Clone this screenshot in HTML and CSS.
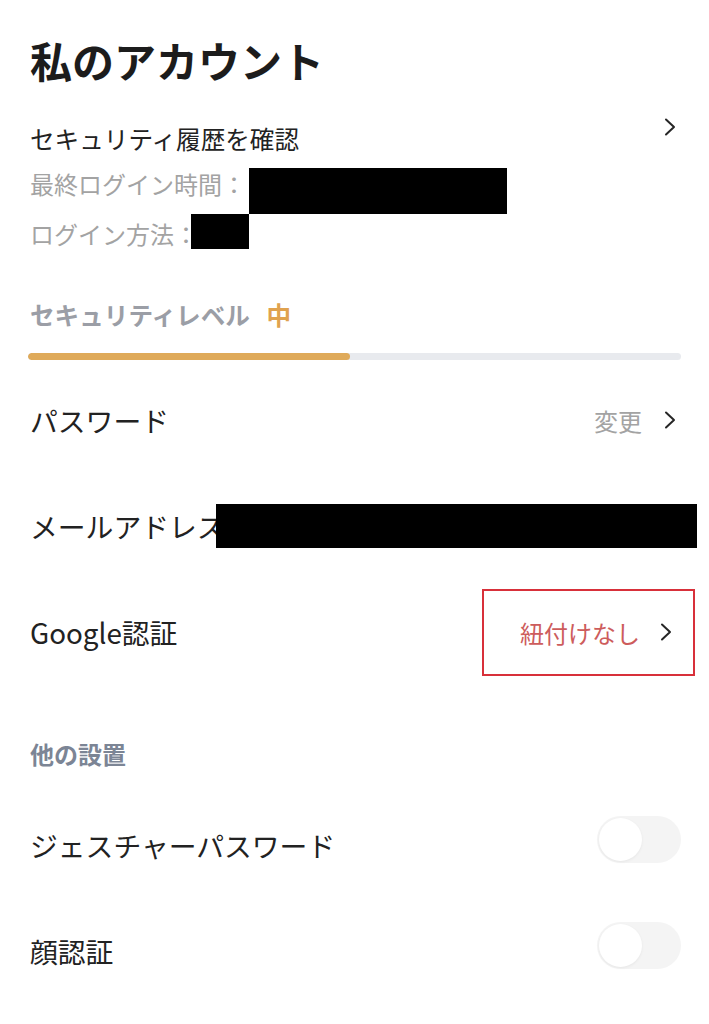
FILE: index.html
```html
<!DOCTYPE html>
<html lang="ja">
	<head>
		<meta charset="UTF-8" />
		<meta name="viewport" content="width=device-width, initial-scale=1.0" />
		<title>私のアカウント</title>
		<link rel="stylesheet" href="styles.css">
	</head>
	<body>
		<div class="page">
			<h1 class="page-title">私のアカウント</h1>

			<div class="history">
				<div class="history-head">
					<span>セキュリティ履歴を確認</span>
					<svg class="chevron" viewBox="0 0 14 20" width="14" height="20"><path d="M3 2.5 L11 10 L3 17.5" /></svg>
				</div>
				<div class="meta-row">
					<span class="meta-text">最終ログイン時間：</span>
					<span class="redact redact-time"></span>
				</div>
				<div class="meta-row meta-row-2">
					<span class="meta-text">ログイン方法：</span>
					<span class="redact redact-method"></span>
				</div>
			</div>

			<div class="level">
				<span class="level-label">セキュリティレベル</span>
				<span class="level-value">中</span>
			</div>
			<div class="level-bar">
				<div class="level-fill"></div>
			</div>

			<div class="row">
				<span class="row-label">パスワード</span>
				<div class="row-action">
					<span class="action-text">変更</span>
					<svg class="chevron" viewBox="0 0 14 20" width="14" height="20"><path d="M3 2.5 L11 10 L3 17.5" /></svg>
				</div>
			</div>

			<div class="row row-email">
				<span class="row-label">メールアドレス</span>
				<span class="redact redact-email"></span>
			</div>

			<div class="row">
				<span class="row-label">Google認証</span>
				<div class="row-action highlight">
					<span class="action-text unlinked">紐付けなし</span>
					<svg class="chevron" viewBox="0 0 14 20" width="14" height="20"><path d="M3 2.5 L11 10 L3 17.5" /></svg>
				</div>
			</div>

			<div class="section-title">他の設置</div>

			<div class="row">
				<span class="row-label">ジェスチャーパスワード</span>
				<div class="toggle"><div class="knob"></div></div>
			</div>

			<div class="row">
				<span class="row-label">顔認証</span>
				<div class="toggle"><div class="knob"></div></div>
			</div>
		</div>
	</body>
</html>
```

FILE: styles.css
```css
* {
	margin: 0;
	padding: 0;
	box-sizing: border-box;
}

body {
	font-family: "Noto Sans CJK JP", "Noto Sans", sans-serif;
	background: white;
	color: #222;
}

.page {
	padding: 0 28px 0 30px;
}

.page-title {
	font-size: 42px;
	font-weight: bold;
	line-height: 60px;
	margin-top: 30px;
	color: #1c1c1c;
}

.chevron {
	fill: none;
	stroke: #262626;
	stroke-width: 2;
	stroke-linecap: round;
	stroke-linejoin: round;
	flex-shrink: 0;
}

/* security history */
.history {
	margin-top: 25px;
}

.history-head {
	display: flex;
	justify-content: space-between;
	align-items: flex-start;
	font-size: 24.6px;
	line-height: 46px;
	padding-right: 4px;
}

.history-head .chevron {
	margin-top: 2px;
}

.meta-row {
	display: flex;
	align-items: flex-start;
	font-size: 24px;
	color: #a3a3a3;
}

.meta-text {
	line-height: 46px;
	white-space: nowrap;
}

.meta-row-2 .meta-text {
	line-height: 40px;
}

.redact {
	display: inline-block;
	background: black;
	flex-shrink: 0;
}

.redact-time {
	width: 258px;
	height: 46px;
	margin-top: 7px;
	margin-left: 3px;
}

.redact-method {
	width: 58px;
	height: 35px;
	margin-left: -7px;
}

.row-email {
	justify-content: flex-start;
}

.redact-email {
	width: 481px;
	height: 44px;
	margin-left: -9px;
	position: relative;
}

/* security level */
.level {
	margin-top: 40px;
	line-height: 40px;
	font-size: 24.6px;
	font-weight: bold;
}

.level-label {
	color: #9b9ea6;
}

.level-value {
	color: #e0a24f;
	margin-left: 11px;
}

.level-bar {
	margin-top: 19px;
	margin-left: -2px;
	height: 7px;
	background: #e8eaee;
	border-radius: 4px;
	overflow: hidden;
}

.level-fill {
	width: 49.3%;
	height: 100%;
	background: #dfaa5a;
	border-radius: 4px;
}

/* rows */
.level-bar + .row {
	margin-top: 7px;
}

.row {
	height: 106px;
	display: flex;
	justify-content: space-between;
	align-items: center;
}

.row-label {
	font-size: 27.8px;
	color: #222;
	white-space: nowrap;
}

.row-action {
	display: flex;
	align-items: center;
	gap: 21px;
	padding-right: 4px;
}

.action-text {
	font-size: 24px;
	color: #a3a3a3;
}

.action-text.unlinked {
	color: #cd5c5c;
}

.highlight {
	border: 2px solid #d8303a;
	height: 87px;
	width: 213px;
	padding: 0 16px 0 36px;
	margin-right: -14px;
	gap: 19px;
}

.section-title {
	margin-top: 49px;
	line-height: 40px;
	font-size: 24px;
	font-weight: bold;
	color: #7c8595;
}

.section-title + .row {
	margin-top: 18px;
}

/* toggle */
.toggle {
	width: 84px;
	height: 47px;
	border-radius: 24px;
	background: #f4f4f4;
	padding: 2px;
	margin-bottom: 12px;
}

.knob {
	width: 43px;
	height: 43px;
	border-radius: 50%;
	background: white;
	box-shadow: 0 1px 3px rgba(0, 0, 0, 0.06);
}
```
